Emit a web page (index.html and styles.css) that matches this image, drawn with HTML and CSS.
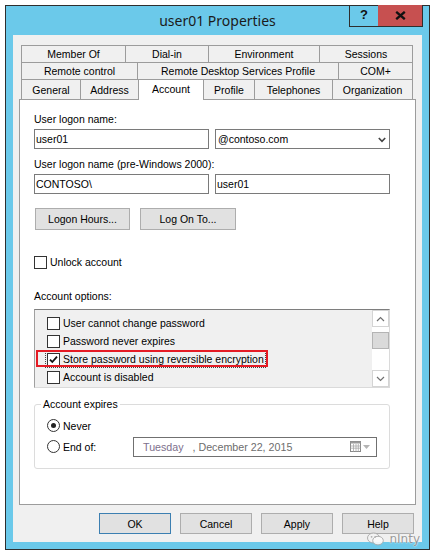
FILE: index.html
```html
<!DOCTYPE html>
<html>
<head>
<meta charset="utf-8">
<title>user01 Properties</title>
<link rel="stylesheet" href="styles.css">
</head>
<body>
<div class="window">
  <div class="titlebar">
    <div class="title">user01 Properties</div>
    <div class="controls">
      <div class="ctl help">?</div>
      <div class="ctl close"><svg width="11" height="9" viewBox="0 0 11 9"><path d="M1.2 0.8 L9.8 8.2 M9.8 0.8 L1.2 8.2" stroke="#111" stroke-width="2.3" fill="none"/></svg></div>
    </div>
  </div>

  <div class="client">
    <div class="tabs">
      <div class="tabrow r1">
        <div class="tab">Member Of</div>
        <div class="tab">Dial-in</div>
        <div class="tab">Environment</div>
        <div class="tab">Sessions</div>
      </div>
      <div class="tabrow r2">
        <div class="tab">Remote control</div>
        <div class="tab">Remote Desktop Services Profile</div>
        <div class="tab">COM+</div>
      </div>
      <div class="tabrow r3">
        <div class="tab">General</div>
        <div class="tab">Address</div>
        <div class="tab active">Account</div>
        <div class="tab">Profile</div>
        <div class="tab">Telephones</div>
        <div class="tab">Organization</div>
      </div>
    </div>

    <div class="panel">
      <div class="label">User logon name:</div>
      <div class="fieldrow">
        <div class="input">user01</div>
        <div class="input combo"><span>@contoso.com</span><svg width="8" height="6" viewBox="0 0 8 6"><path d="M0.8 1 L4 4.4 L7.2 1" stroke="#444" stroke-width="1.6" fill="none"/></svg></div>
      </div>
      <div class="label l2">User logon name (pre-Windows 2000):</div>
      <div class="fieldrow">
        <div class="input">CONTOSO\</div>
        <div class="input">user01</div>
      </div>
      <div class="btnrow">
        <div class="btn hours">Logon Hours...</div>
        <div class="btn logon">Log On To...</div>
      </div>
      <div class="check unlock"><span class="box"></span><span>Unlock account</span></div>

      <div class="label l3">Account options:</div>
      <div class="listbox">
        <div class="items">
          <div class="item"><span class="content"><span class="box"></span><span>User cannot change password</span></span></div>
          <div class="item"><span class="content"><span class="box"></span><span>Password never expires</span></span></div>
          <div class="item focused"><span class="content"><span class="box checked"><svg width="11" height="11" viewBox="0 0 11 11"><path d="M2 5.6 L4.3 8 L9 2.6" stroke="#111" stroke-width="1.8" fill="none"/></svg></span><span>Store password using reversible encryption</span></span><span class="annot"></span></div>
          <div class="item"><span class="content"><span class="box"></span><span>Account is disabled</span></span></div>
        </div>
        <div class="scrollbar">
          <div class="sb-btn"><svg width="9" height="6" viewBox="0 0 9 6"><path d="M1 5 L4.5 1.5 L8 5" stroke="#707070" stroke-width="1.2" fill="none"/></svg></div>
          <div class="sb-track"><div class="sb-thumb"></div></div>
          <div class="sb-btn"><svg width="9" height="6" viewBox="0 0 9 6"><path d="M1 1 L4.5 4.5 L8 1" stroke="#707070" stroke-width="1.2" fill="none"/></svg></div>
        </div>
      </div>

      <fieldset class="group">
        <legend>Account expires</legend>
        <div class="radio-row"><span class="radio on"></span><span>Never</span></div>
        <div class="radio-row">
          <span class="radio-lbl"><span class="radio"></span><span>End of:</span></span>
          <div class="datepicker">
            <span class="dtext"><span class="day">Tuesday</span><span class="date">   , December 22, 2015</span></span>
            <span class="dicons">
              <svg width="11" height="11" viewBox="0 0 11 11"><rect x="0.5" y="0.5" width="10" height="10" fill="#fff" stroke="#8a8a8a"/><rect x="0.5" y="0.5" width="10" height="2" fill="#9a9a9a"/><path d="M3.5 3 V10.5 M6 3 V10.5 M8.3 3 V10.5 M0.5 5 H10.5 M0.5 7.2 H10.5" stroke="#a8a8a8" stroke-width="0.8"/></svg>
              <svg width="7" height="4" viewBox="0 0 7 4"><path d="M0 0 H7 L3.5 4 Z" fill="#b4b4b4"/></svg>
            </span>
          </div>
        </div>
      </fieldset>
    </div>

    <div class="actions">
      <div class="btn dlg default">OK</div>
      <div class="btn dlg">Cancel</div>
      <div class="btn dlg">Apply</div>
      <div class="btn dlg">Help</div>
    </div>
  </div>

  <div class="watermark">
    <svg width="17" height="14" viewBox="0 0 17 14"><ellipse cx="6.5" cy="6" rx="6" ry="5" fill="#f4f4f4" stroke="#a9a9a9"/><ellipse cx="11" cy="8.6" rx="5.3" ry="4.3" fill="#fafafa" stroke="#a9a9a9"/><circle cx="4.6" cy="4.8" r="0.9" fill="#a9a9a9"/><circle cx="8.2" cy="4.8" r="0.9" fill="#a9a9a9"/></svg>
    <span>nInty</span>
  </div>
</div>
</body>
</html>
```

FILE: styles.css
```css
* { box-sizing: border-box; }

body {
  margin: 0;
  background: #fff;
  font-family: "Liberation Sans", Arial, sans-serif;
  font-size: 10.5px;
  color: #000;
}

.window {
  position: relative;
  margin: 5px 0 0 5px;
  width: 425px;
  height: 545px;
  border: 1px solid #2e2e2e;
  background: #6bc9ea;
  padding: 0 7px 7px;
  display: flex;
  flex-direction: column;
}

/* title bar */
.titlebar {
  height: 29px;
  flex: none;
  display: grid;
  grid-template-columns: 1fr auto 1fr;
}
.title {
  grid-column: 2;
  font-family: "Noto Sans", "Open Sans", sans-serif;
  font-size: 14px;
  line-height: 29px;
  color: #1b1b1b;
  white-space: nowrap;
}
.controls {
  grid-column: 3;
  justify-self: end;
  align-self: start;
  display: flex;
  height: 22px;
  margin: -1px -1px 0 0;
}
.ctl {
  display: flex;
  align-items: center;
  justify-content: center;
  border-bottom: 1px solid #2e2e2e;
}
.help {
  width: 29px;
  border-left: 1px solid #2e2e2e;
  font-family: "Liberation Sans", Arial, sans-serif;
  font-weight: bold;
  font-size: 13px;
  color: #111;
  padding-bottom: 2px;
}
.close {
  width: 45px;
  background: #c75050;
  border-right: 1px solid #2e2e2e;
  padding-bottom: 1px;
}

/* client */
.client {
  flex: 1;
  background: #f0f0f0;
  padding: 10px 6px 8px;
  display: flex;
  flex-direction: column;
}

.tabs { margin: 0 2px; flex: none; }
.tabrow { display: grid; }
.r1 { grid-template-columns: 105px 83px 111px 93px; height: 18px; }
.r2 { grid-template-columns: 117px 201px 74px; height: 17px; }
.r3 { grid-template-columns: 60px 58px 65px 51px 78px 80px; height: 19px; }

.tab {
  border: 1px solid #9c9c9c;
  border-left: none;
  background: #f0f0f0;
  display: flex;
  align-items: center;
  justify-content: center;
  white-space: nowrap;
  color: #000;
}
.tab:first-child { border-left: 1px solid #9c9c9c; }
.r2 .tab, .r3 .tab { border-top: none; }
.r3 .tab { border-bottom: none; padding-top: 1px; }
.r3 .tab.active {
  position: relative;
  z-index: 1;
  background: #fff;
  border: 1px solid #9c9c9c;
  border-bottom: none;
  margin: -1px 0 -1px -1px;
  padding-top: 0;
  padding-bottom: 3px;
}

.panel {
  flex: 1;
  background: #fff;
  border: 1px solid #9c9c9c;
  padding: 13px 25px 0 14px;
}

.label { line-height: 13px; margin-bottom: 3px; white-space: nowrap; }
.l2 { margin-top: 9px; }
.l3 { margin-top: 21px; margin-bottom: 6px; }

.fieldrow {
  display: grid;
  grid-template-columns: 175px 175px;
  gap: 6px;
}
.input {
  height: 20px;
  border: 1px solid #7a7a7a;
  background: #fff;
  padding: 0 2px 0 1px;
  line-height: 18px;
  white-space: nowrap;
}
.combo {
  display: flex;
  align-items: center;
  justify-content: space-between;
  padding: 0 3px 0 2px;
}
.combo svg { margin-top: 1px; }

.btnrow {
  display: flex;
  gap: 10px;
  margin-top: 14px;
  padding-left: 1px;
}
.btn {
  height: 22px;
  border: 1px solid #adadad;
  background: #e1e1e1;
  display: flex;
  align-items: center;
  justify-content: center;
  white-space: nowrap;
}
.hours { width: 95px; }
.logon { width: 96px; }

.check {
  display: flex;
  align-items: center;
  gap: 3px;
  height: 13px;
  line-height: 13px;
}
.unlock { margin-top: 26px; }

.box {
  width: 13px;
  height: 13px;
  flex: none;
  border: 1px solid #333;
  background: #fff;
  display: flex;
  align-items: center;
  justify-content: center;
}

/* list box */
.listbox {
  height: 79px;
  display: flex;
  background: #f0f0f0;
  border-top: 1px solid #7e7e7e;
  border-left: 1px solid #a0a0a0;
  border-right: 1px solid #dadada;
  border-bottom: 1px solid #dadada;
}
.items {
  flex: 1;
  padding: 4px 0 0 12px;
}
.item {
  position: relative;
  height: 18px;
  display: flex;
  align-items: center;
}
.content {
  display: flex;
  align-items: center;
  gap: 3px;
  white-space: nowrap;
}
.focused .content {
  outline: 1px dotted #444;
  outline-offset: 1px;
}
.annot {
  position: absolute;
  left: -11px;
  top: 0;
  width: 232px;
  height: 17px;
  border: 2px solid #e51b24;
}

.scrollbar {
  width: 17px;
  flex: none;
  background: #fff;
  display: flex;
  flex-direction: column;
}
.sb-btn {
  height: 17px;
  border: 1px solid #d4d4d4;
  background: #fff;
  display: flex;
  align-items: center;
  justify-content: center;
}
.sb-track { flex: 1; padding-top: 5px; }
.sb-thumb {
  height: 17px;
  background: #dadada;
  border: 1px solid #b4b4b4;
}

/* group box */
.group {
  margin: 10px 0 0;
  min-width: 0;
  border: 1px solid #dcdcdc;
  border-radius: 3px;
  padding: 4px 12px 11px;
}
.group legend {
  line-height: 13px;
  padding: 0 2px;
  margin-left: -6px;
}
.radio-row {
  height: 21px;
  display: flex;
  align-items: center;
  gap: 3px;
  white-space: nowrap;
}
.radio-lbl {
  width: 83px;
  flex: none;
  display: flex;
  align-items: center;
  gap: 3px;
}
.radio {
  width: 13px;
  height: 13px;
  flex: none;
  border: 1px solid #333;
  border-radius: 50%;
  background: #fff;
  display: flex;
  align-items: center;
  justify-content: center;
}
.radio.on::after {
  content: "";
  width: 5px;
  height: 5px;
  border-radius: 50%;
  background: #222;
}
.datepicker {
  width: 245px;
  height: 20px;
  border: 1px solid #707070;
  background: #fff;
  display: flex;
  align-items: center;
  justify-content: space-between;
  padding: 0 6px 0 9px;
}
.dtext { white-space: pre; font-size: 10.7px; }
.day { color: #7d6f8c; }
.date { color: #6d6d6d; }
.dicons { display: flex; align-items: center; gap: 2px; }

/* dialog buttons */
.actions {
  flex: none;
  display: flex;
  justify-content: flex-end;
  gap: 9px;
  margin: 8px 2px 0 0;
}
.dlg { width: 72px; height: 21px; }
.dlg.default { border-color: #3c7fb1; }

/* watermark overlay */
.watermark {
  position: absolute;
  right: 9px;
  bottom: 3px;
  display: flex;
  align-items: center;
  gap: 5px;
  font-family: "DejaVu Sans", sans-serif;
  font-size: 12px;
  color: #8f8f8f;
  text-shadow: 0 0 2px #fff, 0 0 1px #fff;
  opacity: 0.9;
}
```
